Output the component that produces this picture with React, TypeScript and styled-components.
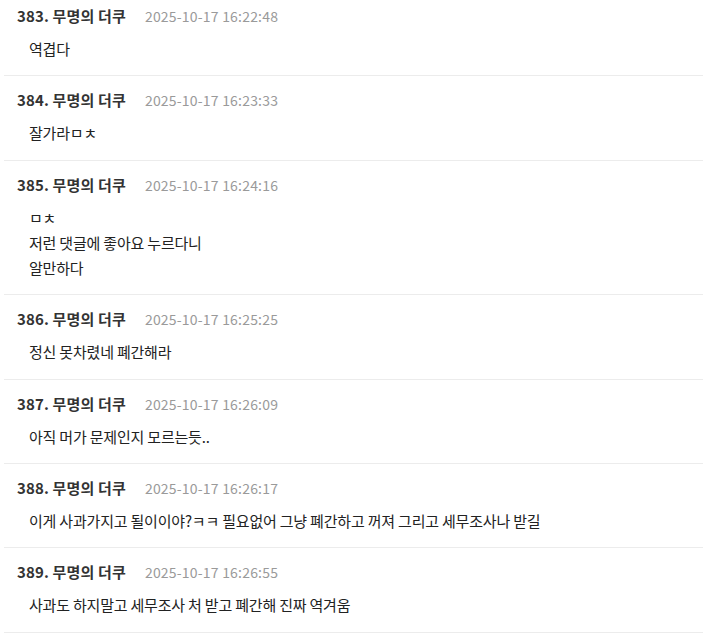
import React from 'react';
import styled, { createGlobalStyle } from 'styled-components';

const GlobalStyle = createGlobalStyle`
  html, body {
    margin: 0;
    padding: 0;
    background: #fff;
    overflow: hidden;
  }
  body {
    font-family: 'Noto Sans CJK KR', 'Noto Sans', sans-serif;
  }
`;

type Comment = {
  no: number;
  author: string;
  date: string;
  lines: string[];
};

const comments: Comment[] = [
  { no: 383, author: '무명의 더쿠', date: '2025-10-17 16:22:48', lines: ['역겹다'] },
  { no: 384, author: '무명의 더쿠', date: '2025-10-17 16:23:33', lines: ['잘가라ㅁㅊ'] },
  {
    no: 385,
    author: '무명의 더쿠',
    date: '2025-10-17 16:24:16',
    lines: ['ㅁㅊ', '저런 댓글에 좋아요 누르다니', '알만하다'],
  },
  { no: 386, author: '무명의 더쿠', date: '2025-10-17 16:25:25', lines: ['정신 못차렸네 폐간해라'] },
  { no: 387, author: '무명의 더쿠', date: '2025-10-17 16:26:09', lines: ['아직 머가 문제인지 모르는듯..'] },
  {
    no: 388,
    author: '무명의 더쿠',
    date: '2025-10-17 16:26:17',
    lines: ['이게 사과가지고 될이이야?ㅋㅋ 필요없어 그냥 폐간하고 꺼져 그리고 세무조사나 받길'],
  },
  {
    no: 389,
    author: '무명의 더쿠',
    date: '2025-10-17 16:26:55',
    lines: ['사과도 하지말고 세무조사 처 받고 폐간해 진짜 역겨움'],
  },
];

const List = styled.ul`
  list-style: none;
  margin: -8px 0 0 4px;
  padding: 0;
`;

const Row = styled.li`
  padding: 12px 13px 14.4px;
  border-bottom: 1px solid #ececec;
`;

const Header = styled.div`
  display: flex;
  align-items: baseline;
  gap: 19px;
  height: 23px;
  line-height: 23px;
`;

const Author = styled.span`
  font-size: 15px;
  font-weight: 700;
  color: #333;
  letter-spacing: 0.15px;
`;

const DateText = styled.span`
  font-size: 14px;
  color: #9a9a9a;
  letter-spacing: 0.2px;
`;

const Body = styled.div`
  margin-top: 9px;
  padding-left: 12px;
  font-size: 15px;
  line-height: 25px;
  color: #222;
  letter-spacing: -0.2px;
`;

const Line = styled.div`
  white-space: nowrap;
`;

export default function App() {
  return (
    <>
      <GlobalStyle />
      <List>
        {comments.map((c) => (
          <Row key={c.no}>
            <Header>
              <Author>
                {c.no}. {c.author}
              </Author>
              <DateText>{c.date}</DateText>
            </Header>
            <Body>
              {c.lines.map((l, i) => (
                <Line key={i}>{l}</Line>
              ))}
            </Body>
          </Row>
        ))}
      </List>
    </>
  );
}
